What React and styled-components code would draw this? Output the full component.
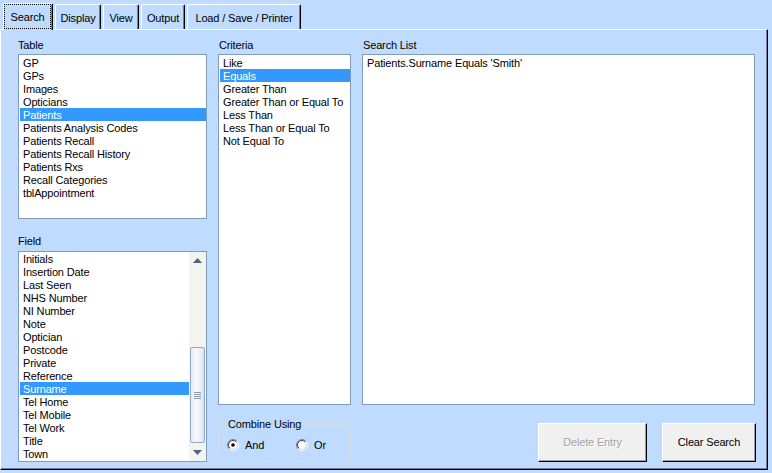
import React from "react";
import styled, { createGlobalStyle } from "styled-components";

const GlobalStyle = createGlobalStyle`
  html, body {
    margin: 0;
    padding: 0;
    background: #bfdbff;
  }
  body {
    font-family: "Liberation Sans", Arial, sans-serif;
    font-size: 11px;
    letter-spacing: -0.15px;
    color: #000;
  }
`;

const tables = [
  "GP",
  "GPs",
  "Images",
  "Opticians",
  "Patients",
  "Patients Analysis Codes",
  "Patients Recall",
  "Patients Recall History",
  "Patients Rxs",
  "Recall Categories",
  "tblAppointment",
];

const fields = [
  "Initials",
  "Insertion Date",
  "Last Seen",
  "NHS Number",
  "NI Number",
  "Note",
  "Optician",
  "Postcode",
  "Private",
  "Reference",
  "Surname",
  "Tel Home",
  "Tel Mobile",
  "Tel Work",
  "Title",
  "Town",
];

const criteria = [
  "Like",
  "Equals",
  "Greater Than",
  "Greater Than or Equal To",
  "Less Than",
  "Less Than or Equal To",
  "Not Equal To",
];

const tabs = [
  { label: "Search", width: 50, active: true },
  { label: "Display", width: 46 },
  { label: "View", width: 36 },
  { label: "Output", width: 44 },
  { label: "Load / Save / Printer", width: 114 },
];

const Screen = styled.div`
  width: 772px;
  height: 473px;
  background: #bfdbff;
  overflow: hidden;
`;

const TabStrip = styled.div`
  display: flex;
  align-items: flex-end;
  gap: 2px;
  height: 29px;
  padding-left: 3px;
  box-sizing: border-box;
`;

const Tab = styled.div`
  position: relative;
  z-index: 1;
  box-sizing: border-box;
  width: ${(p) => p.$width}px;
  height: ${(p) => (p.$active ? 27 : 25)}px;
  margin-bottom: ${(p) => (p.$active ? -1 : 0)}px;
  display: flex;
  align-items: stretch;
  justify-content: center;
  background: #bfdbff;
  border-top: 1px solid #fff;
  border-left: 1px solid #fff;
  border-right: 1px solid #000;
  border-radius: 2px 2px 0 0;
  box-shadow: inset -1px 0 0 #6f7f99;
`;

const TabLabel = styled.span`
  flex: 1;
  display: flex;
  align-items: center;
  justify-content: center;
  padding-top: 1px;
  padding-bottom: ${(p) => (p.$active ? 1 : 0)}px;
  margin: ${(p) => (p.$active ? "0 1px 1px 0" : "0")};
  border: 1px ${(p) => (p.$active ? "dotted #000" : "solid transparent")};
  white-space: nowrap;
`;

const Panel = styled.div`
  box-sizing: border-box;
  width: 768px;
  height: 441px;
  border-top: 1px solid #fff;
  border-left: 1px solid #fff;
  border-right: 1px solid #000;
  border-bottom: 1px solid #000;
  box-shadow: inset -1px -1px 0 #6f7f99;
  padding: 9px 12px 0 17px;
  display: grid;
  grid-template-columns: 189px 133px 393px;
  column-gap: 11px;
  align-items: start;
`;

const Column = styled.div`
  display: flex;
  flex-direction: column;
`;

const Label = styled.div`
  line-height: 13px;
  height: 13px;
  margin-top: ${(p) => p.$top || 0}px;
  margin-bottom: ${(p) => p.$bottom ?? 2}px;
  padding-left: ${(p) => p.$indent || 0}px;
`;

const ListBox = styled.div`
  box-sizing: border-box;
  height: ${(p) => p.$height}px;
  background: #fff;
  border: 1px solid #7f9db9;
  padding: ${(p) => (p.$flush ? "0" : "1px 0 0 1px")};
  overflow: hidden;
  display: flex;
`;

const Items = styled.div`
  flex: 1;
  padding-left: ${(p) => (p.$inset ? 1 : 0)}px;
  min-width: 0;
`;

const Item = styled.div`
  height: 13px;
  line-height: 14px;
  padding-left: ${(p) => p.$pad ?? 3}px;
  white-space: nowrap;
  background: ${(p) => (p.$selected ? "#3399ff" : "transparent")};
  color: ${(p) => (p.$selected ? "#fff" : "#000")};
`;

const ScrollBar = styled.div`
  width: 17px;
  display: flex;
  flex-direction: column;
  background: #f3f3ef;
`;

const Arrow = styled.div`
  height: 17px;
  display: flex;
  align-items: center;
  justify-content: center;
`;

const Track = styled.div`
  flex: 1;
  padding-top: 78px;
  display: flex;
  flex-direction: column;
`;

const Thumb = styled.div`
  box-sizing: border-box;
  height: 96px;
  margin: 0 1px;
  border: 1px solid #97a9c9;
  border-radius: 2px;
  background: linear-gradient(to right, #e4e9f3, #f7f9fd 40%, #e8ecf5 80%, #d3dae9);
  display: flex;
  flex-direction: column;
  align-items: center;
  justify-content: center;
  gap: 1px;
`;

const Grip = styled.span`
  width: 7px;
  height: 1px;
  background: #8e9bb3;
`;

const GroupBox = styled.div`
  position: relative;
  box-sizing: border-box;
  height: 38px;
  margin-top: 19px;
  border: 1px solid #d6dbe0;
  border-radius: 3px;
  display: flex;
  align-items: center;
  padding: 3px 0 0 8px;
`;

const Legend = styled.span`
  position: absolute;
  top: -7px;
  left: 8px;
  padding: 0 1px;
  line-height: 13px;
  background: #bfdbff;
`;

const RadioOption = styled.label`
  width: ${(p) => p.$width}px;
  display: flex;
  align-items: center;
  gap: 6px;
`;

const ButtonRow = styled.div`
  display: flex;
  justify-content: flex-end;
  gap: 15px;
  margin-top: 18px;
  margin-right: -1px;
`;

const Button = styled.div`
  box-sizing: border-box;
  width: ${(p) => p.$width}px;
  height: 39px;
  display: flex;
  align-items: center;
  justify-content: center;
  padding-bottom: 2px;
  background: #f0f0f0;
  border: 1px solid;
  border-color: #fff #000 #000 #fff;
  box-shadow: inset -1px -1px 0 #a0a0a0;
  color: ${(p) => (p.$disabled ? "#a2a2a2" : "#000")};
  text-shadow: ${(p) => (p.$disabled ? "1px 1px 0 #fff" : "none")};
`;

const Triangle = ({ up }) => (
  <svg width="9" height="5" viewBox="0 0 9 5">
    <path d={up ? "M0 5 L4.5 0 L9 5 Z" : "M0 0 L4.5 5 L9 0 Z"} fill="#4d6185" />
  </svg>
);

const Radio = ({ checked, id }) => (
  <svg width="12" height="12" viewBox="0 0 12 12">
    <defs>
      <linearGradient id={`o${id}`} x1="0" y1="0" x2="1" y2="1">
        <stop offset="0.45" stopColor="#808080" />
        <stop offset="0.55" stopColor="#ffffff" />
      </linearGradient>
      <linearGradient id={`i${id}`} x1="0" y1="0" x2="1" y2="1">
        <stop offset="0.45" stopColor="#404040" />
        <stop offset="0.55" stopColor="#d4d0c8" />
      </linearGradient>
    </defs>
    <circle cx="6" cy="6" r="5.5" fill="none" stroke={`url(#o${id})`} />
    <circle cx="6" cy="6" r="4.5" fill="#fff" stroke={`url(#i${id})`} />
    {checked && <circle cx="6" cy="6" r="1.8" fill="#000" />}
  </svg>
);

export default function App() {
  return (
    <Screen>
      <GlobalStyle />
      <TabStrip>
        {tabs.map((t) => (
          <Tab key={t.label} $width={t.width} $active={t.active}>
            <TabLabel $active={t.active}>{t.label}</TabLabel>
          </Tab>
        ))}
      </TabStrip>
      <Panel>
        <Column>
          <Label>Table</Label>
          <ListBox $height={165}>
            <Items>
              {tables.map((t) => (
                <Item key={t} $selected={t === "Patients"}>
                  {t}
                </Item>
              ))}
            </Items>
          </ListBox>
          <Label $top={16} $bottom={3}>
            Field
          </Label>
          <ListBox $height={211} $flush>
            <Items $inset>
              {fields.map((f) => (
                <Item key={f} $selected={f === "Surname"}>
                  {f}
                </Item>
              ))}
            </Items>
            <ScrollBar>
              <Arrow>
                <Triangle up />
              </Arrow>
              <Track>
                <Thumb>
                  <Grip />
                  <Grip />
                  <Grip />
                  <Grip />
                </Thumb>
              </Track>
              <Arrow>
                <Triangle />
              </Arrow>
            </ScrollBar>
          </ListBox>
        </Column>

        <Column>
          <Label $indent={1}>Criteria</Label>
          <ListBox $height={351}>
            <Items>
              {criteria.map((c) => (
                <Item key={c} $selected={c === "Equals"}>
                  {c}
                </Item>
              ))}
            </Items>
          </ListBox>
          <GroupBox>
            <Legend>Combine Using</Legend>
            <RadioOption $width={69}>
              <Radio id="and" checked />
              And
            </RadioOption>
            <RadioOption $width={40}>
              <Radio id="or" />
              Or
            </RadioOption>
          </GroupBox>
        </Column>

        <Column>
          <Label $indent={1}>Search List</Label>
          <ListBox $height={351}>
            <Items>
              <Item>Patients.Surname Equals 'Smith'</Item>
            </Items>
          </ListBox>
          <ButtonRow>
            <Button $width={109} $disabled>
              Delete Entry
            </Button>
            <Button $width={94}>Clear Search</Button>
          </ButtonRow>
        </Column>
      </Panel>
    </Screen>
  );
}
